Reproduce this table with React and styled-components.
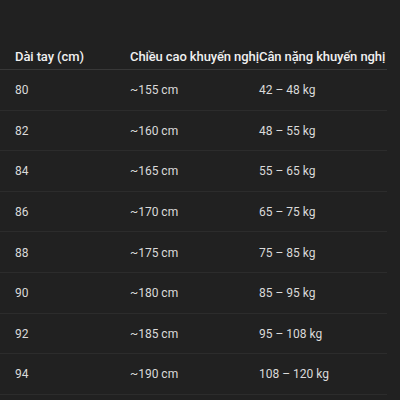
import styled, { createGlobalStyle } from 'styled-components'

const rows = [
  ['80', '~155 cm', '42 – 48 kg'],
  ['82', '~160 cm', '48 – 55 kg'],
  ['84', '~165 cm', '55 – 65 kg'],
  ['86', '~170 cm', '65 – 75 kg'],
  ['88', '~175 cm', '75 – 85 kg'],
  ['90', '~180 cm', '85 – 95 kg'],
  ['92', '~185 cm', '95 – 108 kg'],
  ['94', '~190 cm', '108 – 120 kg'],
]

const GlobalStyle = createGlobalStyle`
  html, body {
    margin: 0;
    background: #212121;
    font-family: Roboto, "Noto Sans", sans-serif;
  }
`

const Wrap = styled.div`
  width: 387px;
  padding-top: 43px;
`

const Row = styled.div`
  display: grid;
  grid-template-columns: 115px 129px 1fr;
  height: ${p => (p.$head ? 26 : 39.6)}px;
  align-items: center;
  border-bottom: 1px solid ${p => (p.$head ? '#383838' : '#2c2c2c')};
`

const Cell = styled.div`
  padding-left: 15px;
  padding-top: ${p => (p.$head ? 0 : 1)}px;
  white-space: nowrap;
  font-size: ${p => (p.$head ? 13 : 12)}px;
  font-weight: ${p => (p.$head ? 500 : 400)};
  letter-spacing: ${p => (p.$head ? '-0.1px' : '0')};
  color: ${p => (p.$head ? '#f0f0f0' : '#dadada')};
`

export default function App() {
  return (
    <>
      <GlobalStyle />
      <Wrap>
        <Row $head>
          <Cell $head>Dài tay (cm)</Cell>
          <Cell $head>Chiều cao khuyến nghị</Cell>
          <Cell $head>Cân nặng khuyến nghị</Cell>
        </Row>
        {rows.map(r => (
          <Row key={r[0]}>
            {r.map((c, i) => <Cell key={i}>{c}</Cell>)}
          </Row>
        ))}
      </Wrap>
    </>
  )
}
